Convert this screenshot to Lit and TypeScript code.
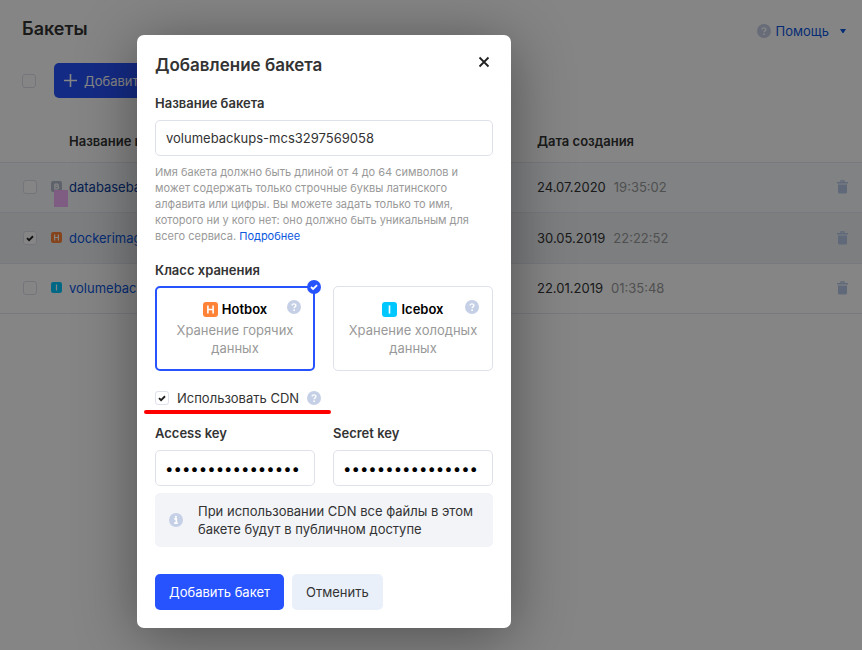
import { LitElement, html, css, svg } from "lit";
import { customElement, property } from "lit/decorators.js";
import { classMap } from "lit/directives/class-map.js";

interface Bucket {
  name: string;
  letter: string;
  tone: string;
  date: string;
  time: string;
  checked?: boolean;
  active?: boolean;
}

const buckets: Bucket[] = [
  { name: "databasebackups", letter: "B", tone: "grey", date: "24.07.2020", time: "19:35:02", active: true },
  { name: "dockerimages", letter: "H", tone: "hot", date: "30.05.2019", time: "22:22:52", checked: true },
  { name: "volumebackups", letter: "I", tone: "ice", date: "22.01.2019", time: "01:35:48" },
];

const shared = css`
  *, *::before, *::after { box-sizing: border-box; }
  a { text-decoration: none; }
  button, input { font: inherit; margin: 0; }
  .check {
    appearance: none;
    display: block;
    flex: none;
    width: 14px;
    height: 14px;
    border: 1px solid #dfe1ea;
    border-radius: 3px;
    background: #fff;
  }
  .check:checked {
    background: #fff url("data:image/svg+xml,%3Csvg xmlns='http://www.w3.org/2000/svg' viewBox='0 0 12 12'%3E%3Cpath d='M3 6.1 5.1 8.1 9 4.3' fill='none' stroke='%23222' stroke-width='1.9'/%3E%3C/svg%3E") center / 12px 12px no-repeat;
  }
`;

@customElement("class-badge")
class ClassBadge extends LitElement {
  @property() letter = "";
  @property() tone = "hot";
  @property({ type: Boolean }) large = false;
  static styles = css`
    :host { display: inline-block; flex: none; }
    svg { display: block; width: 11px; height: 11px; }
    .large { width: 15px; height: 15px; }
    .hot { fill: #ff8337; }
    .ice { fill: #00c8ff; }
    .grey { fill: #b4bccb; }
    .glyph { fill: none; stroke: #fff; stroke-width: 1.6; }
  `;
  render() {
    const marks: Record<string, string> = {
      H: "M4.9 3.4V11.6M10.1 3.4V11.6M4.9 7.5H10.1",
      I: "M7.5 3.4V11.6",
      B: "M5.2 4.2H8.3A1.6 1.6 0 0 1 8.3 7.4H5.2V4.2V10.8H8.6A1.7 1.7 0 0 0 8.6 7.4",
    };
    return html`<svg viewBox="0 0 15 15" aria-hidden="true" class=${classMap({ large: this.large })}>
      <rect class=${this.tone} width="15" height="15" rx="3"></rect>
      <path class="glyph" d=${marks[this.letter]}></path>
    </svg>`;
  }
}

@customElement("hint-icon")
class HintIcon extends LitElement {
  @property() kind = "question";
  static styles = css`
    :host { display: inline-block; flex: none; }
    svg { display: block; width: 14px; height: 14px; }
  `;
  render() {
    const mark = this.kind === "info"
      ? svg`<path d="M5.3 5.9H7.3V9.9M5.2 10.1H8.8" fill="none" stroke="#fff" stroke-width="1.6"></path><circle cx="6.9" cy="3.8" r="1.1" fill="#fff"></circle>`
      : svg`<path d="M5.1 5.6C5.1 3.3 8.9 3.4 8.9 5.5C8.9 6.9 7.1 6.8 7.1 8.3" fill="none" stroke="#fff" stroke-width="1.4"></path><circle cx="7.1" cy="10.2" r=".9" fill="#fff"></circle>`;
    return html`<svg viewBox="0 0 14 14" aria-hidden="true"><circle cx="7" cy="7" r="7" fill="#c5d0e6"></circle>${mark}</svg>`;
  }
}

@customElement("bucket-page")
class BucketPage extends LitElement {
  static styles = [shared, css`
    :host { display: block; }
    .top { display: flex; justify-content: space-between; align-items: center; padding: 16px 14px 0 22px; }
    h1 { margin: 0; font-size: 18px; line-height: 26px; font-weight: 600; }
    .help { display: flex; align-items: center; gap: 5px; margin-top: 4px; color: #0b57e0; }
    .caret { width: 10px; height: 10px; margin-left: 4px; fill: #0b57e0; }
    .tools { display: flex; align-items: center; gap: 18px; padding: 21px 22px 22px; }
    .add { display: flex; align-items: center; gap: 7px; height: 35px; padding: 0 14px 0 10px; border: 0; border-radius: 5px; background: #2753ff; color: #fff; }
    .plus { width: 13px; height: 13px; stroke: #fff; stroke-width: 1.6; }
    table { width: 100%; border-collapse: collapse; table-layout: fixed; }
    .c-check { width: 51px; }
    .c-badge { width: 18px; }
    .c-name { width: 468px; }
    .c-bin { width: 40px; }
    th { height: 42px; padding: 0; text-align: left; font-weight: 600; }
    td { height: 50px; padding: 0; border: solid #e4e9f1; border-width: 1px 0; white-space: nowrap; }
    tr.active td { background: #f6f9fd; }
    tr.checked td { height: 51px; background: #eff2f6; }
    td:first-child { padding-left: 23px; }
    .name { color: #0b57e0; }
    .active .name { color: #093c9c; }
    .time { margin-left: 8px; color: #999; }
    .badge { position: relative; }
    .cursor { position: absolute; left: 3px; top: 27px; width: 14px; height: 17px; background: #f3b0f8; }
    .bin { display: block; padding: 0; border: 0; background: none; margin-left: 15px; }
    .bin svg { display: block; width: 11px; height: 14px; fill: #b9c9e8; }
  `];
  render() {
    return html`
      <header class="top">
        <h1>Бакеты</h1>
        <a class="help" href="#help"><hint-icon></hint-icon>Помощь
          <svg class="caret" viewBox="0 0 10 10" aria-hidden="true"><path d="M2 3H8L5.5 7H4.5Z"></path></svg></a>
      </header>
      <div class="tools">
        <input class="check" type="checkbox" aria-label="Выбрать все">
        <button class="add"><svg class="plus" viewBox="0 0 13 13" aria-hidden="true"><path d="M6.5 0V13M0 6.5H13"></path></svg>Добавить</button>
      </div>
      <table>
        <colgroup><col class="c-check"><col class="c-badge"><col class="c-name"><col><col class="c-bin"></colgroup>
        <thead><tr><th></th><th></th><th>Название и класс</th><th>Дата создания</th><th></th></tr></thead>
        <tbody>${buckets.map((b) => html`
          <tr class=${classMap({ active: !!b.active, checked: !!b.checked })}>
            <td><input class="check" type="checkbox" aria-label=${b.name} ?checked=${b.checked}></td>
            <td class="badge"><class-badge .letter=${b.letter} .tone=${b.tone}></class-badge>${b.active ? html`<span class="cursor"></span>` : ""}</td>
            <td><a class="name" href="#bucket">${b.name}</a></td>
            <td>${b.date}<span class="time">${b.time}</span></td>
            <td><button class="bin" aria-label="Удалить"><svg viewBox="0 0 11 14" aria-hidden="true"><path d="M3.3 2V.3H7.7V2H11V3.5H0V2ZM4.5 2H6.5V1.4H4.5ZM1 4.6H10V12A1.6 1.6 0 0 1 8.4 13.6H2.6A1.6 1.6 0 0 1 1 12Z" fill-rule="evenodd"></path></svg></button></td>
          </tr>`)}</tbody>
      </table>`;
  }
}

@customElement("bucket-dialog")
class BucketDialog extends LitElement {
  static styles = [shared, css`
    :host { display: block; width: 100%; max-width: 374px; }
    .dialog { padding: 18px; border-radius: 7px; background: #fff; box-shadow: 0 8px 60px rgba(0, 0, 0, .4); }
    .head { display: flex; justify-content: space-between; align-items: flex-start; margin-bottom: 17px; }
    h2 { margin: 0; font-size: 17px; line-height: 24px; font-weight: 600; }
    .close { width: 18px; height: 18px; padding: 2px 3px; border: 0; background: none; }
    .close svg { display: block; width: 12px; height: 12px; stroke: #222; stroke-width: 1.8; }
    .label { display: block; margin: 0 0 8px; padding: 0; font-weight: 600; line-height: 18px; }
    .field { display: block; width: 100%; height: 36px; padding: 0 10px; border: 1px solid #dfe1ea; border-radius: 5px; background: #fff; color: #333; outline: 0; }
    .secret { padding: 0 9px; color: #000; font-size: 15px; }
    .hint { margin: 8px 0 17px; font-size: 11px; line-height: 16px; color: #999; }
    .hint a { color: #0b57e0; }
    fieldset { margin: 0; padding: 0; border: 0; min-width: 0; }
    legend.label { margin-bottom: 7px; }
    .pair { display: grid; grid-template-columns: 1fr 1fr; gap: 18px; }
    .card { position: relative; display: block; height: 85px; padding: 13px 14px; border: 1px solid #dfe1ea; border-radius: 5px; text-align: center; color: #999; line-height: 18px; }
    .card.on { padding: 12px 13px; border: 2px solid #2753ff; }
    .card input { position: absolute; inset: 0; opacity: 0; }
    .kind { display: flex; justify-content: center; align-items: center; gap: 4px; margin-bottom: 3px; font-weight: 600; color: #000; }
    .card hint-icon { position: absolute; right: 13px; top: 13px; }
    .card.on hint-icon { right: 12px; top: 12px; }
    .tick { position: absolute; right: -8px; top: -8px; width: 14px; height: 14px; }
    .cdn { position: relative; display: flex; align-items: center; gap: 8px; margin: 18px 0 17px; line-height: 18px; }
    .cdn label { display: flex; align-items: center; gap: 8px; }
    .mark { position: absolute; left: -11px; top: 21px; width: 187px; height: 4px; border-radius: 2px; background: #f00; }
    .notice { display: flex; align-items: center; gap: 15px; margin: 7px 0 27px; padding: 9px 14px; border-radius: 5px; background: #f2f4f8; line-height: 18px; }
    .notice p { margin: 0; }
    .actions { display: flex; gap: 8px; }
    .btn { height: 36px; padding: 0 14px; border: 0; border-radius: 5px; background: #eaf0f9; color: #333; }
    .primary { background: #2753ff; color: #fff; }
  `];

  private card(title: string, letter: string, tone: string, text: string, on: boolean) {
    return html`<label class=${classMap({ card: true, on })}>
      <input type="radio" name="storage" ?checked=${on}>
      <span class="kind"><class-badge large .letter=${letter} .tone=${tone}></class-badge>${title}</span>
      ${text}
      <hint-icon></hint-icon>
      ${on ? html`<svg class="tick" viewBox="0 0 14 14" aria-hidden="true"><circle cx="7" cy="7" r="7" fill="#2753ff"></circle><path d="M4 7 6.1 9 10.1 5.1" fill="none" stroke="#fff" stroke-width="1.8"></path></svg>` : ""}
    </label>`;
  }

  render() {
    return html`<form class="dialog" role="dialog" aria-labelledby="title">
      <div class="head">
        <h2 id="title">Добавление бакета</h2>
        <button class="close" type="button" aria-label="Закрыть"><svg viewBox="0 0 12 12" aria-hidden="true"><path d="M1.5 1.5 10.5 10.5M10.5 1.5 1.5 10.5"></path></svg></button>
      </div>
      <label class="label" for="name">Название бакета</label>
      <input class="field" id="name" type="text" value="volumebackups-mcs3297569058">
      <p class="hint">Имя бакета должно быть длиной от 4 до 64 символов и может содержать только строчные буквы латинского алфавита или цифры. Вы можете задать только то имя, которого ни у кого нет: оно должно быть уникальным для всего сервиса. <a href="#more">Подробнее</a></p>
      <fieldset>
        <legend class="label">Класс хранения</legend>
        <div class="pair">
          ${this.card("Hotbox", "H", "hot", "Хранение горячих данных", true)}
          ${this.card("Icebox", "I", "ice", "Хранение холодных данных", false)}
        </div>
      </fieldset>
      <div class="cdn">
        <label><input class="check" type="checkbox" checked>Использовать CDN</label>
        <hint-icon></hint-icon>
        <span class="mark"></span>
      </div>
      <div class="pair">
        <div><label class="label" for="access">Access key</label><input class="field secret" id="access" type="password" value="0123456789abcdef"></div>
        <div><label class="label" for="secret">Secret key</label><input class="field secret" id="secret" type="password" value="0123456789abcdef"></div>
      </div>
      <div class="notice"><hint-icon kind="info"></hint-icon><p>При использовании CDN все файлы в этом бакете будут в публичном доступе</p></div>
      <div class="actions"><button class="btn primary" type="button">Добавить бакет</button><button class="btn" type="button">Отменить</button></div>
    </form>`;
  }
}

@customElement("app-root")
class AppRoot extends LitElement {
  static styles = css`
    :host { display: grid; min-height: 100vh; overflow: hidden; background: #fff; color: #333; font: 13px/18px Inter, "Liberation Sans", sans-serif; }
    bucket-page, .overlay { grid-area: 1 / 1; min-width: 0; }
    .overlay { position: relative; padding: 35px 16px 22px 137px; background: rgba(0, 0, 0, .48); }
  `;
  render() {
    return html`<bucket-page></bucket-page><div class="overlay"><bucket-dialog></bucket-dialog></div>`;
  }
}
